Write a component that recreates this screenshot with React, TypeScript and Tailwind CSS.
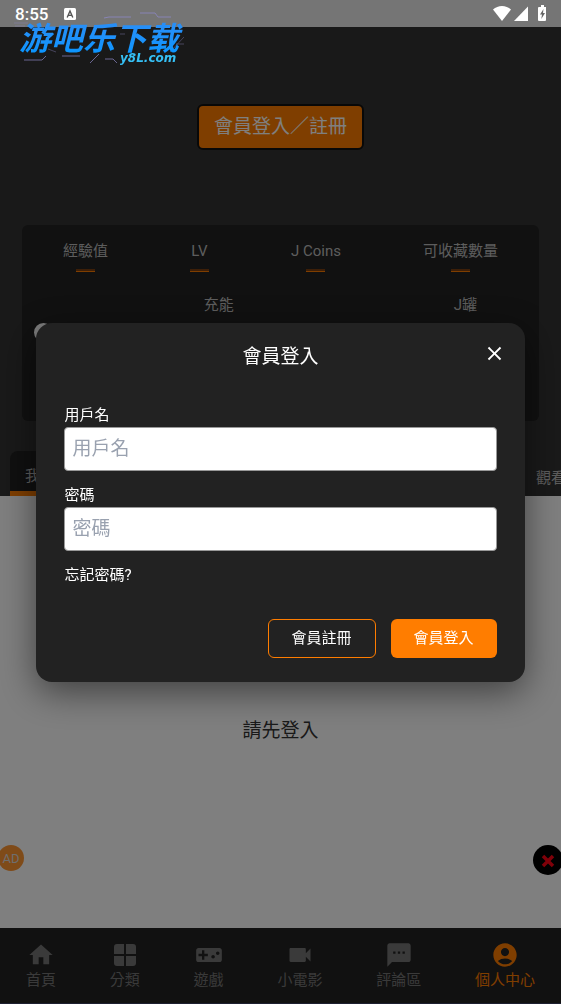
import type { ReactNode } from "react";
import {
  MdAccountCircle,
  MdClose,
  MdHome,
  MdTextsms,
  MdVideocam,
  MdVideogameAsset,
} from "react-icons/md";

const stats = ["經驗值", "LV", "J Coins", "可收藏數量"];

function GridIcon() {
  return (
    <svg viewBox="0 0 28 28" className="size-7" fill="currentColor" aria-hidden="true">
      <path d="M6 3h7v10H3V6a3 3 0 0 1 3-3ZM15 3h7a3 3 0 0 1 3 3v7H15ZM3 15h10v10H6a3 3 0 0 1-3-3ZM15 15h10v7a3 3 0 0 1-3 3h-7Z" />
    </svg>
  );
}

const navItems: { label: string; icon: ReactNode; active?: boolean }[] = [
  { label: "首頁", icon: <MdHome className="size-7" /> },
  { label: "分類", icon: <GridIcon /> },
  { label: "遊戲", icon: <MdVideogameAsset className="size-7" /> },
  { label: "小電影", icon: <MdVideocam className="size-7" /> },
  { label: "評論區", icon: <MdTextsms className="size-7" /> },
  { label: "個人中心", icon: <MdAccountCircle className="size-7" />, active: true },
];

function StatusBar() {
  return (
    <div className="relative z-20 flex h-[27px] items-center bg-[#757575] pr-[14px] pl-[15px] text-white">
      <span className="text-[17px] leading-5 font-medium">8:55</span>
      <svg viewBox="0 0 12 12" className="ml-4 size-3" aria-hidden="true">
        <rect width="12" height="12" rx="1.5" fill="#fff" />
        <path d="M3.2 9.5 6 3l2.8 6.5M4.2 7.4h3.6" fill="none" stroke="#555" strokeWidth="1.4" />
      </svg>
      <svg viewBox="0 0 54 17" className="ml-auto h-[17px] w-[54px]" fill="#fff" aria-hidden="true">
        <path d="M0 4.6C5-.1 13-.1 18 4.6L9 16Z" />
        <path d="M35 1.5V16H21Z" />
        <path d="M46 2h2V0h3v2h2v13a1 1 0 0 1-1 1h-6a1 1 0 0 1-1-1V3a1 1 0 0 1 1-1Z" />
        <path d="M50.500 4 47 9.500h2L48.300 14l3.700-6h-2Z" fill="#666" />
      </svg>
    </div>
  );
}

function Logo() {
  return (
    <div className="absolute top-[10px] left-[10px] z-30 h-[58px] w-[180px] font-bold italic">
      <svg
        viewBox="0 0 180 58"
        className="absolute inset-0 size-full"
        fill="none"
        stroke="#8d88c4"
        strokeWidth="1"
        aria-hidden="true"
      >
        <path d="M94 8l5-1h22M130 3h15l3 4h13" opacity=".8" />
        <path d="M14 50h18l4-4M52 46h18M80 53l9-9M95 49h8l4 4" opacity=".7" />
        <path d="M4 13h14M160 42l14-15M166 34h8M5 16h10M110 24h5M38 39l8 3" opacity=".4" />
      </svg>
      <span className="absolute top-[8px] left-[9px] bg-linear-to-b from-[#2b8df5] to-[#0795ff] bg-clip-text pr-2 font-['Noto_Sans_CJK_SC',sans-serif] text-[32px] leading-9 font-bold whitespace-nowrap text-transparent">
        游吧乐下载
      </span>
      <span className="absolute top-[40px] left-[110px] font-['DejaVu_Sans',sans-serif] text-[12px] leading-4 font-bold text-[#36c0f5]">
        y8L.com
      </span>
    </div>
  );
}

function Field({ id, label, type }: { id: string; label: string; type: string }) {
  return (
    <div className="mb-3">
      <label htmlFor={id} className="block text-[15px] leading-6">
        {label}
      </label>
      <input
        id={id}
        type={type}
        placeholder={label}
        className="block h-11 w-full rounded border border-[#999] bg-white px-[7px] text-[19px] text-black placeholder:text-gray-400"
      />
    </div>
  );
}

function LoginDialog() {
  return (
    <div className="fixed inset-0 z-10 flex items-center justify-center bg-black/50">
      <div
        role="dialog"
        aria-modal="true"
        aria-labelledby="login-title"
        className="relative w-[87%] rounded-2xl bg-[#222] px-7 pt-5 pb-6 text-white shadow-[0_10px_36px_rgba(0,0,0,0.5)]"
      >
        <h2 id="login-title" className="mb-8 text-center text-[19px] leading-7">
          會員登入
        </h2>
        <button type="button" aria-label="關閉" className="absolute top-[19px] right-[19px]">
          <MdClose className="size-[23px]" />
        </button>
        <form>
          <Field id="username" label="用戶名" type="text" />
          <Field id="password" label="密碼" type="password" />
          <a href="#forgot" className="block w-fit text-[15px] leading-6">
            忘記密碼?
          </a>
          <div className="mt-8 flex justify-end gap-[15px] text-[15px]">
            <button type="button" className="h-[39px] rounded-md border border-[#ff7d00] px-[23px]">
              會員註冊
            </button>
            <button type="button" className="h-[39px] rounded-md bg-[#ff7d00] px-[23px]">
              會員登入
            </button>
          </div>
        </form>
      </div>
    </div>
  );
}

export default function App() {
  return (
    <div className="relative flex min-h-screen flex-col overflow-hidden bg-[#333] font-[Roboto,'Noto_Sans_CJK_TC',sans-serif]">
      <StatusBar />
      <Logo />

      <header className="flex flex-col pt-[77px]">
        <button
          type="button"
          className="mx-auto h-[46px] rounded-md border-2 border-[#111] bg-[#ff7d00] px-[15px] text-[19px] text-white"
        >
          會員登入／註冊
        </button>

        <section className="mx-[22px] mt-[75px] min-h-[196px] rounded-md bg-[#222] pt-[14px] text-[15px] leading-6 text-[#bbb]">
          <div className="flex justify-around">
            {stats.map((stat) => (
              <div key={stat} className="flex flex-col items-center gap-[6px]">
                <span>{stat}</span>
                <span className="h-[3px] w-[19px] border-b border-[#ff7d00] bg-[#7a3f10]" />
              </div>
            ))}
          </div>
          <div className="mt-[21px] grid grid-cols-[3fr_1fr] px-3 text-center">
            <span>充能</span>
            <span>J罐</span>
          </div>
          <div className="mt-[6px] ml-3 size-[19px] rounded-full bg-white" />
        </section>

        <div role="tablist" className="mt-[30px] flex h-[45px] overflow-hidden pl-[10px] text-[15px] text-[#bbb]">
          <button
            role="tab"
            aria-selected="true"
            className="rounded-t-lg border-b-[5px] border-[#ff7d00] bg-[#202020] px-[15px] pt-[10px]"
          >
            我的
          </button>
          <button role="tab" aria-selected="false" className="-mr-[5px] ml-auto pt-[10px]">
            觀看
          </button>
        </div>
      </header>

      <main className="flex-1 bg-white pt-[221px] text-center text-[19px] leading-7 text-[#333]">
        請先登入
      </main>

      <nav className="flex h-[76px] justify-between border-b border-[#3b3f60] bg-[#222] px-[26px] pt-[13px]">
        {navItems.map(({ label, icon, active }) => (
          <a
            key={label}
            href="#"
            className={`flex flex-col items-center text-[15px] leading-[22px] ${active ? "text-[#ff7d00]" : "text-[#757575]"}`}
          >
            {icon}
            {label}
          </a>
        ))}
      </nav>

      <button
        type="button"
        className="fixed bottom-[133px] -left-[2px] size-[26px] rounded-full bg-[#ff9633] text-[13px] leading-none text-[#ddd]"
      >
        AD
      </button>
      <button
        type="button"
        aria-label="關閉廣告"
        className="fixed -right-[2px] bottom-[129px] size-[30px] rounded-full bg-black"
      >
        <svg viewBox="0 0 30 30" className="size-full" aria-hidden="true">
          <path d="m10 11 10 10M20 11 10 21" stroke="#ff0012" strokeWidth="3.500" />
        </svg>
      </button>

      <LoginDialog />
    </div>
  );
}
